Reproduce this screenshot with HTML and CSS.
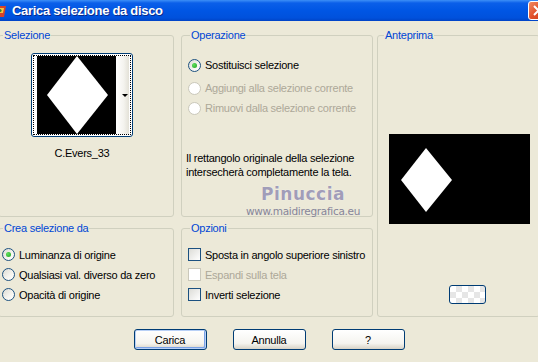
FILE: index.html
```html
<!DOCTYPE html>
<html lang="it">
<head>
  <meta charset="UTF-8">
  <title>Carica selezione da disco</title>
  <link rel="stylesheet" href="styles.css">
</head>
<body>
  <div class="titlebar">
    <svg class="app-icon" width="16" height="16" viewBox="0 0 16 16">
      <path d="M2 3 L14 3 L12 14 L4 14 Z" fill="#d8422a"/>
      <path d="M4 5 L12 5 L11 10 L5 10 Z" fill="#f4c542"/>
      <circle cx="8" cy="7.5" r="1.6" fill="#3a7d2c"/>
    </svg>
    <span class="title">Carica selezione da disco</span>
    <span class="close">
      <svg width="21" height="19" viewBox="0 0 21 19">
        <path d="M6 5 L15 14 M15 5 L6 14" stroke="#fff" stroke-width="2"/>
      </svg>
    </span>
  </div>

  <div class="content">
    <fieldset class="group group-left sel">
      <legend>Selezione</legend>
      <div class="thumb-wrap">
        <div class="thumb">
          <div class="thumb-inner">
            <svg width="79" height="78" viewBox="0 0 79 78">
              <rect width="79" height="78" fill="#000"/>
              <path d="M40 0 L71 39 L40 78 L10 39 Z" fill="#fff"/>
            </svg>
            <div class="thumb-drop"><span class="arrow"></span></div>
          </div>
        </div>
        <div class="thumb-name">C.Evers_33</div>
      </div>
    </fieldset>

    <fieldset class="group group-mid op">
      <legend>Operazione</legend>
      <div class="choice first"><span class="radio checked"></span>Sostituisci selezione</div>
      <div class="choice second disabled"><span class="radio"></span>Aggiungi alla selezione corrente</div>
      <div class="choice disabled"><span class="radio"></span>Rimuovi dalla selezione corrente</div>
      <p class="note">Il rettangolo originale della selezione<br>intersecherà completamente la tela.</p>
    </fieldset>

    <fieldset class="group preview">
      <legend>Anteprima</legend>
      <svg class="preview-img" width="141" height="90" viewBox="0 0 141 90">
        <rect width="141" height="90" fill="#000"/>
        <path d="M37 14 L63 46 L37 78 L12 46 Z" fill="#fff"/>
      </svg>
      <div class="swatch"></div>
    </fieldset>

    <fieldset class="group group-left source">
      <legend>Crea selezione da</legend>
      <div class="opt"><span class="radio checked"></span>Luminanza di origine</div>
      <div class="opt"><span class="radio"></span>Qualsiasi val. diverso da zero</div>
      <div class="opt"><span class="radio"></span>Opacità di origine</div>
    </fieldset>

    <fieldset class="group group-mid options">
      <legend>Opzioni</legend>
      <div class="opt"><span class="check"></span>Sposta in angolo superiore sinistro</div>
      <div class="opt disabled"><span class="check"></span>Espandi sulla tela</div>
      <div class="opt"><span class="check"></span>Inverti selezione</div>
    </fieldset>

    <div class="watermark">
      <span class="wm-name">Pinuccia</span>
      <span class="wm-url">www.maidiregrafica.eu</span>
    </div>
  </div>

  <div class="buttons">
    <button class="btn default">Carica</button>
    <button class="btn">Annulla</button>
    <button class="btn">?</button>
  </div>
</body>
</html>
```

FILE: styles.css
```css
* {
  margin: 0;
  padding: 0;
  box-sizing: border-box;
}

body {
  width: 538px;
  height: 362px;
  overflow: hidden;
  background-color: #ece9d8;
  font-family: "Liberation Sans", Arial, sans-serif;
  font-size: 11px;
  letter-spacing: -0.25px;
  color: #000;
}

/* title bar */
.titlebar {
  height: 21px;
  display: flex;
  align-items: center;
  overflow: hidden;
  background: linear-gradient(#3d8ff7 0, #0b5fe9 3px, #0056e4 50%, #0051dc 85%, #0043c6 100%);
}

.app-icon {
  flex: none;
  margin-left: -8px;
}

.title {
  flex: 1;
  margin-left: 4px;
  color: #fff;
  font-weight: bold;
  font-size: 13px;
  letter-spacing: -0.3px;
  text-shadow: 1px 1px 0 #0a2a8a;
}

.close {
  flex: none;
  width: 21px;
  height: 19px;
  margin-right: -11px;
  border: 1px solid #fff;
  border-radius: 3px;
  background: linear-gradient(135deg, #f08a62, #e0502a 50%, #c53a16);
  display: flex;
}

.close svg {
  margin: -1px;
}

/* group boxes */
.content {
  position: relative;
  display: grid;
  grid-template-columns: 176px 7px 192px 4px 163px;
  grid-template-rows: 188px 95px;
  row-gap: 5px;
  margin: 8px 0 0 -2px;
}

.group {
  border: 1px solid #d0d0bf;
  border-radius: 3px;
  padding: 0 6px 6px 6px;
  min-width: 0;
}

.group legend {
  padding: 0 1px;
  line-height: 13px;
  color: #0046d5;
}

.group-left {
  grid-column: 1;
  padding-left: 3px;
}

.group-left legend {
  margin-left: 1px;
}

.group-mid {
  grid-column: 3;
}

.group-mid legend {
  margin-left: 2px;
}

.sel, .op {
  grid-row: 1;
}

.source, .options {
  grid-row: 2;
}

.preview {
  grid-column: 5;
  grid-row: 1 / span 2;
}

/* selection thumbnail */
.thumb-wrap {
  width: 102px;
  margin: 11px 0 0 29px;
  text-align: center;
}

.thumb {
  border: 1px solid #003c74;
  border-radius: 3px;
  padding: 1px;
  background-color: #fff;
}

.thumb-inner {
  display: flex;
  border: 1px dotted #000;
  padding-left: 3px;
}

.thumb-inner svg {
  display: block;
}

.thumb-drop {
  width: 13px;
  display: flex;
  align-items: center;
  justify-content: flex-end;
  padding-right: 1px;
  background: linear-gradient(90deg, #fff, #f4f3ee 60%, #e3e1d7);
}

.arrow {
  width: 0;
  height: 0;
  border-left: 3px solid transparent;
  border-right: 3px solid transparent;
  border-top: 3px solid #000;
}

.thumb-name {
  margin-top: 10px;
  line-height: 13px;
}

/* radios and checkboxes */
.choice, .opt {
  display: flex;
  align-items: center;
  gap: 4px;
  white-space: nowrap;
}

.choice {
  height: 20px;
}

.choice.first {
  margin-top: 13px;
}

.choice.second {
  margin-top: 3px;
}

.opt {
  height: 19px;
  margin-top: 1px;
}

.opt:first-of-type {
  margin-top: 10px;
}

.disabled {
  color: #aca899;
}

.radio {
  flex: none;
  width: 13px;
  height: 13px;
  border: 1px solid #1c5180;
  border-radius: 50%;
  background: linear-gradient(135deg, #dcdbd3, #f6f5f0 60%, #fff);
  display: flex;
  align-items: center;
  justify-content: center;
}

.radio.checked::after {
  content: "";
  width: 5px;
  height: 5px;
  border-radius: 50%;
  background: radial-gradient(circle at 35% 35%, #5fe05c, #21a121);
}

.disabled .radio {
  border-color: #cac8bb;
  background: #fff;
}

.check {
  flex: none;
  width: 13px;
  height: 13px;
  border: 1px solid #1c5180;
  background: linear-gradient(135deg, #dcdcd7, #fff);
}

.disabled .check {
  border-color: #cac8bb;
  background: #fff;
}

.note {
  margin: 33px 0 0 -2px;
  line-height: 14px;
}

/* preview */
.preview-img {
  display: block;
  margin: 92px 0 0 5px;
}

.swatch {
  width: 37px;
  height: 19px;
  margin: 61px 0 0 65px;
  border: 1px solid #003c74;
  border-radius: 3px;
  background-color: #fff;
  background-image: conic-gradient(#e6e6e6 25%, #fff 0 50%, #e6e6e6 0 75%, #fff 0);
  background-size: 12px 12px;
}

/* watermark over the dialog */
.watermark {
  position: absolute;
  left: 244px;
  top: 157px;
  width: 122px;
  text-align: center;
  line-height: 1;
}

.wm-name {
  display: block;
  font-family: "DejaVu Sans", sans-serif;
  font-weight: bold;
  font-size: 17px;
  letter-spacing: 0.5px;
  color: #a19db8;
  text-shadow: 0 0 1px #fff;
}

.wm-url {
  display: block;
  margin-top: 3px;
  font-family: "DejaVu Sans", sans-serif;
  font-size: 10.5px;
  letter-spacing: -0.3px;
  color: #86859a;
}

/* dialog buttons */
.buttons {
  display: flex;
  justify-content: center;
  gap: 26px;
  margin-top: 12px;
}

.btn {
  width: 73px;
  height: 21px;
  border: 1px solid #003c74;
  border-radius: 3px;
  background: linear-gradient(#fff, #f5f4ef 70%, #d8d3c6);
  font-family: inherit;
  font-size: 11px;
  letter-spacing: -0.25px;
  color: #000;
}

.btn.default {
  box-shadow: inset 0 0 0 1px #b8d0f6, inset -1px -1px 0 1px #7ba2e7;
}
```
